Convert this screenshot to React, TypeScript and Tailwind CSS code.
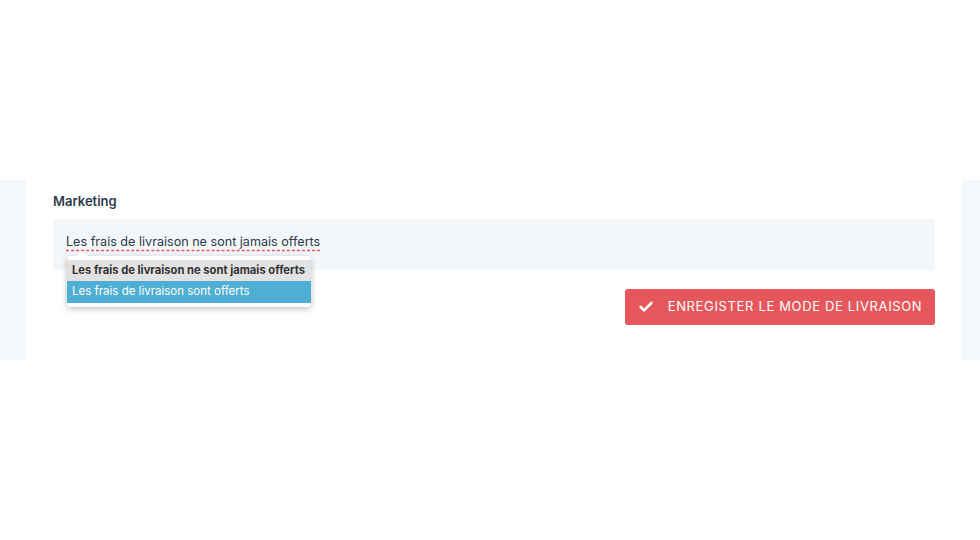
import { Check } from 'lucide-react';

const options = [
  'Les frais de livraison ne sont jamais offerts',
  'Les frais de livraison sont offerts',
];

const font = { fontFamily: 'Inter, Roboto, "Open Sans", sans-serif' };

export default function App() {
  return (
    <div className="w-[980px] h-[540px] bg-white flex flex-col" style={font}>
      <div className="h-[180px]" />
      <div className="h-[180px] bg-[#f4f7fb] pl-[26px] pr-[18px] flex">
        <div className="flex-1 bg-white px-[27px] pt-[13px]">
          <h3 className="text-[13px] font-semibold text-[#2d3a4b] leading-[16px]">Marketing</h3>
          <div className="relative mt-[10px] h-[51px] bg-[#f3f7fa] px-[13px] pt-[9px]">
            <span className="text-[12.6px] text-[#2d3a4b] leading-[16px] underline decoration-dashed decoration-[#e5575b] underline-offset-[4px] [text-decoration-skip-ink:none]">
              {options[0]}
            </span>
            {/* menu déroulant */}
            <div className="absolute left-[14px] top-[37px] w-[244px] bg-white rounded-[4px] shadow-[0_2px_6px_rgba(0,0,0,0.25)] py-[4px] z-10">
              <div className="absolute -top-[5px] left-[9px] w-0 h-0 border-l-[6px] border-r-[6px] border-b-[5px] border-l-transparent border-r-transparent border-b-white" />
              <div className="h-[21px] bg-[#e2e2e2] px-[5px] flex items-center text-[11.2px] font-bold text-[#333]">
                {options[0]}
              </div>
              <div className="h-[22px] bg-[#4faed3] px-[5px] flex items-center text-[11.5px] text-white">
                {options[1]}
              </div>
            </div>
          </div>
          <div className="flex justify-end mt-[19px]">
            <button className="w-[310px] h-[36px] bg-[#e5575b] rounded-[3px] flex items-center justify-center gap-[14px] text-white text-[13px] tracking-[0.05em] uppercase">
              <Check size={16} strokeWidth={4} />
              Enregister le mode de livraison
            </button>
          </div>
        </div>
      </div>
      <div className="flex-1" />
    </div>
  );
}
